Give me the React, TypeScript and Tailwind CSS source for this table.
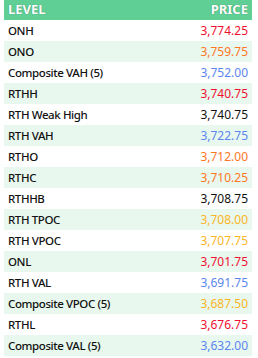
const rows: { level: string; price: string; color: string }[] = [
  { level: "ONH", price: "3,774.25", color: "text-[#f0102f]" },
  { level: "ONO", price: "3,759.75", color: "text-[#ff7726]" },
  { level: "Composite VAH (5)", price: "3,752.00", color: "text-[#5b86f0]" },
  { level: "RTHH", price: "3,740.75", color: "text-[#f0102f]" },
  { level: "RTH Weak High", price: "3,740.75", color: "text-[#111111]" },
  { level: "RTH VAH", price: "3,722.75", color: "text-[#5b86f0]" },
  { level: "RTHO", price: "3,712.00", color: "text-[#ff7726]" },
  { level: "RTHC", price: "3,710.25", color: "text-[#ff7726]" },
  { level: "RTHHB", price: "3,708.75", color: "text-[#111111]" },
  { level: "RTH TPOC", price: "3,708.00", color: "text-[#fbb526]" },
  { level: "RTH VPOC", price: "3,707.75", color: "text-[#fbb526]" },
  { level: "ONL", price: "3,701.75", color: "text-[#f0102f]" },
  { level: "RTH VAL", price: "3,691.75", color: "text-[#5b86f0]" },
  { level: "Composite VPOC (5)", price: "3,687.50", color: "text-[#fbb526]" },
  { level: "RTHL", price: "3,676.75", color: "text-[#f0102f]" },
  { level: "Composite VAL (5)", price: "3,632.00", color: "text-[#5b86f0]" },
];

export default function App() {
  return (
    <div className="w-[258px] h-[358px] bg-white pl-1 pr-[6px] font-['Noto_Sans',sans-serif]">
      <div className="flex items-center justify-between h-5 bg-[#5fcf95] px-1 text-[13px] font-bold text-white [text-shadow:0_0_1px_rgba(0,0,0,0.4)]">
        <span>LEVEL</span>
        <span>PRICE</span>
      </div>
      {rows.map((r, i) => (
        <div
          key={r.level}
          className={`flex items-center justify-between h-[21px] px-1 text-[11.5px] font-medium tracking-[-0.4px] ${
            i % 2 === 1 ? "bg-[#e8f8ee]" : "bg-white"
          }`}
        >
          <span className="text-[#111111]">{r.level}</span>
          <span className={`${r.color} text-[12px] font-normal tracking-normal`}>{r.price}</span>
        </div>
      ))}
    </div>
  );
}
